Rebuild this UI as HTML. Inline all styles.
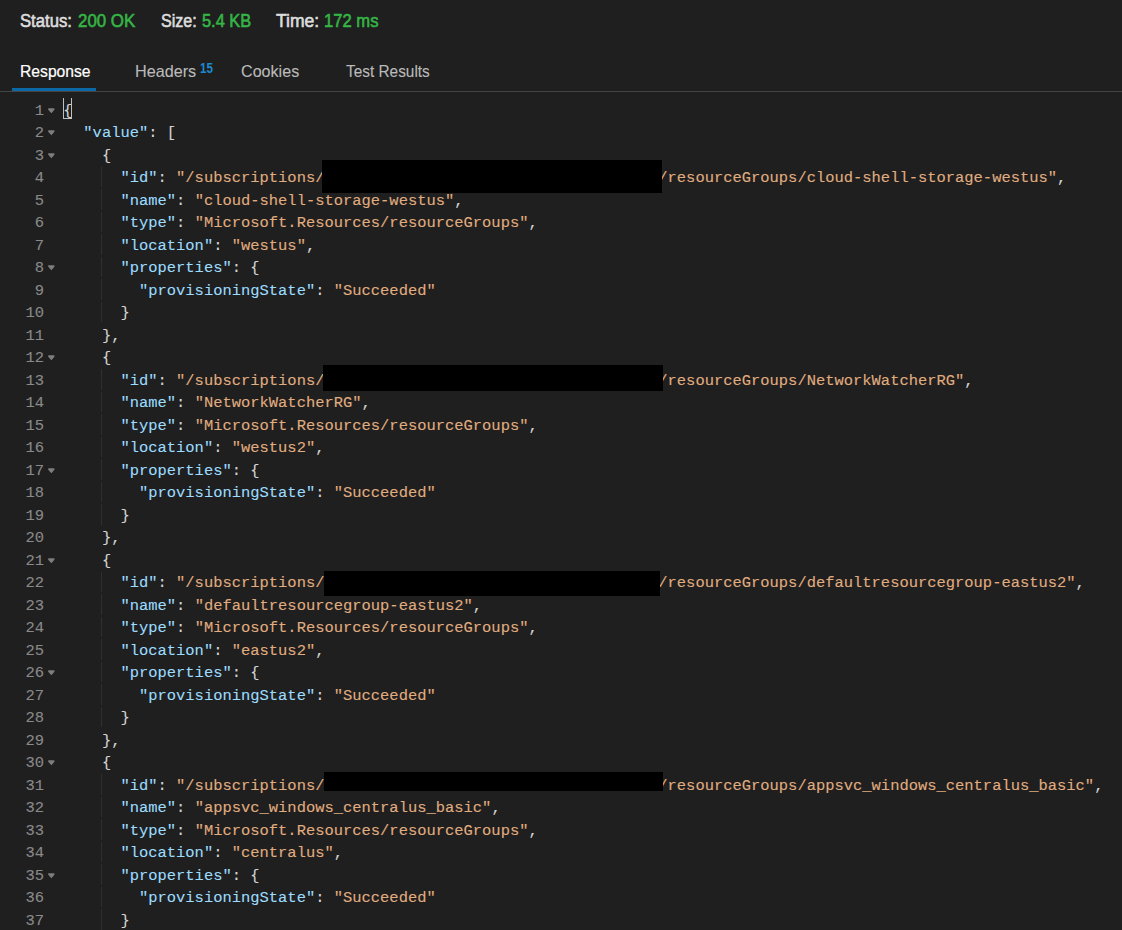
<!DOCTYPE html>
<html><head><meta charset="utf-8"><style>
html,body{margin:0;padding:0;}
body{width:1122px;height:930px;overflow:hidden;background:#1f1f1f;position:relative;}
.ui{font-family:"Liberation Sans",sans-serif;position:absolute;white-space:nowrap;}
.code{font-family:"Liberation Mono",monospace;position:absolute;white-space:pre;-webkit-text-stroke:0.1px currentColor;font-size:15.467px;line-height:22.50px;height:22.50px;color:#d4d4d4;}
.k{color:#9cdcfe}.s{color:#e0ad80}
.ln{font-family:"Liberation Mono",monospace;position:absolute;-webkit-text-stroke:0.1px currentColor;font-size:15.467px;line-height:22.50px;color:#8a8a8a;text-align:right;width:40px;left:4px;}
.fold{position:absolute;width:0;height:0;border-left:3.2px solid transparent;border-right:3.2px solid transparent;border-top:5.3px solid #8a8a8a;}
.redact{position:absolute;background:#000;}
.guide{position:absolute;width:1px;background:#2d302d;}
</style></head><body>

<div class="ui" style="left:20.40px;top:12.90px;font-size:17.8px;font-weight:normal;line-height:1;color:#dddddd;transform:scaleX(0.938);transform-origin:0 0;-webkit-text-stroke:0.6px #dddddd">Status:</div>
<div class="ui" style="left:77.80px;top:12.90px;font-size:17.8px;font-weight:normal;line-height:1;color:#34b545;transform:scaleX(0.949);transform-origin:0 0;-webkit-text-stroke:0.6px #34b545">200 OK</div>
<div class="ui" style="left:160.90px;top:12.90px;font-size:17.8px;font-weight:normal;line-height:1;color:#dddddd;transform:scaleX(0.905);transform-origin:0 0;-webkit-text-stroke:0.6px #dddddd">Size:</div>
<div class="ui" style="left:202.00px;top:12.90px;font-size:17.8px;font-weight:normal;line-height:1;color:#34b545;transform:scaleX(0.921);transform-origin:0 0;-webkit-text-stroke:0.6px #34b545">5.4 KB</div>
<div class="ui" style="left:275.90px;top:12.90px;font-size:17.8px;font-weight:normal;line-height:1;color:#dddddd;transform:scaleX(0.986);transform-origin:0 0;-webkit-text-stroke:0.6px #dddddd">Time:</div>
<div class="ui" style="left:324.26px;top:12.90px;font-size:17.8px;font-weight:normal;line-height:1;color:#34b545;transform:scaleX(0.935);transform-origin:0 0;-webkit-text-stroke:0.6px #34b545">172 ms</div>
<div class="ui" style="left:19.50px;top:62.80px;font-size:16.5px;font-weight:normal;line-height:1;color:#ffffff;transform:scaleX(0.950);transform-origin:0 0;-webkit-text-stroke:0.2px #ffffff">Response</div>
<div class="ui" style="left:134.52px;top:62.80px;font-size:16.5px;font-weight:normal;line-height:1;color:#bababa;transform:scaleX(0.980);transform-origin:0 0;-webkit-text-stroke:0.1px #bababa">Headers</div>
<div class="ui" style="left:199.60px;top:60.90px;font-size:14px;font-weight:bold;line-height:1;color:#1c89d0;transform:scaleX(0.827);transform-origin:0 0;-webkit-text-stroke:0px #1c89d0">15</div>
<div class="ui" style="left:241.40px;top:62.80px;font-size:16.5px;font-weight:normal;line-height:1;color:#bababa;transform:scaleX(0.976);transform-origin:0 0;-webkit-text-stroke:0.1px #bababa">Cookies</div>
<div class="ui" style="left:345.70px;top:62.80px;font-size:16.5px;font-weight:normal;line-height:1;color:#bababa;transform:scaleX(0.932);transform-origin:0 0;-webkit-text-stroke:0.1px #bababa">Test Results</div>
<div style="position:absolute;left:0;top:91px;width:1122px;height:1px;background:#454545"></div>
<div style="position:absolute;left:12px;top:88px;width:84px;height:3px;background:#0d68a6"></div>
<div class="ln" style="top:99.75px">1</div>
<svg class="fold2" width="7" height="6" viewBox="0 0 7 6" style="position:absolute;left:48.2px;top:107.70px"><path d="M0.6 0.2 H6.0 Q6.4 0.2 6.4 0.8 V1.8 L3.4 5.3 L0.2 1.8 V0.8 Q0.2 0.2 0.6 0.2 Z" fill="#7d7d7d"/></svg>
<div class="code" style="left:64.80px;top:99.85px"><span style="position:relative;left:-1.5px">{</span></div>
<div class="ln" style="top:122.25px">2</div>
<svg class="fold2" width="7" height="6" viewBox="0 0 7 6" style="position:absolute;left:48.2px;top:130.20px"><path d="M0.6 0.2 H6.0 Q6.4 0.2 6.4 0.8 V1.8 L3.4 5.3 L0.2 1.8 V0.8 Q0.2 0.2 0.6 0.2 Z" fill="#7d7d7d"/></svg>
<div class="code" style="left:64.80px;top:122.35px">  <span class="k">&quot;value&quot;</span>: [</div>
<div class="ln" style="top:144.75px">3</div>
<svg class="fold2" width="7" height="6" viewBox="0 0 7 6" style="position:absolute;left:48.2px;top:152.70px"><path d="M0.6 0.2 H6.0 Q6.4 0.2 6.4 0.8 V1.8 L3.4 5.3 L0.2 1.8 V0.8 Q0.2 0.2 0.6 0.2 Z" fill="#7d7d7d"/></svg>
<div class="code" style="left:64.80px;top:144.85px">    {</div>
<div class="ln" style="top:167.25px">4</div>
<div class="code" style="left:64.80px;top:167.35px">      <span class="k">&quot;id&quot;</span>: <span class="s">&quot;/subscriptions/</span>                                    <span class="s">/resourceGroups/cloud-shell-storage-westus&quot;</span>,</div>
<div class="redact" style="left:322px;top:160px;width:340px;height:33px"></div>
<div class="ln" style="top:189.75px">5</div>
<div class="code" style="left:64.80px;top:189.85px">      <span class="k">&quot;name&quot;</span>: <span class="s">&quot;cloud-shell-storage-westus&quot;</span>,</div>
<div class="ln" style="top:212.25px">6</div>
<div class="code" style="left:64.80px;top:212.35px">      <span class="k">&quot;type&quot;</span>: <span class="s">&quot;Microsoft.Resources/resourceGroups&quot;</span>,</div>
<div class="ln" style="top:234.75px">7</div>
<div class="code" style="left:64.80px;top:234.85px">      <span class="k">&quot;location&quot;</span>: <span class="s">&quot;westus&quot;</span>,</div>
<div class="ln" style="top:257.25px">8</div>
<svg class="fold2" width="7" height="6" viewBox="0 0 7 6" style="position:absolute;left:48.2px;top:265.20px"><path d="M0.6 0.2 H6.0 Q6.4 0.2 6.4 0.8 V1.8 L3.4 5.3 L0.2 1.8 V0.8 Q0.2 0.2 0.6 0.2 Z" fill="#7d7d7d"/></svg>
<div class="code" style="left:64.80px;top:257.35px">      <span class="k">&quot;properties&quot;</span>: {</div>
<div class="ln" style="top:279.75px">9</div>
<div class="code" style="left:64.80px;top:279.85px">        <span class="k">&quot;provisioningState&quot;</span>: <span class="s">&quot;Succeeded&quot;</span></div>
<div class="ln" style="top:302.25px">10</div>
<div class="code" style="left:64.80px;top:302.35px">      }</div>
<div class="ln" style="top:324.75px">11</div>
<div class="code" style="left:64.80px;top:324.85px">    },</div>
<div class="ln" style="top:347.25px">12</div>
<svg class="fold2" width="7" height="6" viewBox="0 0 7 6" style="position:absolute;left:48.2px;top:355.20px"><path d="M0.6 0.2 H6.0 Q6.4 0.2 6.4 0.8 V1.8 L3.4 5.3 L0.2 1.8 V0.8 Q0.2 0.2 0.6 0.2 Z" fill="#7d7d7d"/></svg>
<div class="code" style="left:64.80px;top:347.35px">    {</div>
<div class="ln" style="top:369.75px">13</div>
<div class="code" style="left:64.80px;top:369.85px">      <span class="k">&quot;id&quot;</span>: <span class="s">&quot;/subscriptions/</span>                                    <span class="s">/resourceGroups/NetworkWatcherRG&quot;</span>,</div>
<div class="redact" style="left:323px;top:365px;width:340px;height:26px"></div>
<div class="ln" style="top:392.25px">14</div>
<div class="code" style="left:64.80px;top:392.35px">      <span class="k">&quot;name&quot;</span>: <span class="s">&quot;NetworkWatcherRG&quot;</span>,</div>
<div class="ln" style="top:414.75px">15</div>
<div class="code" style="left:64.80px;top:414.85px">      <span class="k">&quot;type&quot;</span>: <span class="s">&quot;Microsoft.Resources/resourceGroups&quot;</span>,</div>
<div class="ln" style="top:437.25px">16</div>
<div class="code" style="left:64.80px;top:437.35px">      <span class="k">&quot;location&quot;</span>: <span class="s">&quot;westus2&quot;</span>,</div>
<div class="ln" style="top:459.75px">17</div>
<svg class="fold2" width="7" height="6" viewBox="0 0 7 6" style="position:absolute;left:48.2px;top:467.70px"><path d="M0.6 0.2 H6.0 Q6.4 0.2 6.4 0.8 V1.8 L3.4 5.3 L0.2 1.8 V0.8 Q0.2 0.2 0.6 0.2 Z" fill="#7d7d7d"/></svg>
<div class="code" style="left:64.80px;top:459.85px">      <span class="k">&quot;properties&quot;</span>: {</div>
<div class="ln" style="top:482.25px">18</div>
<div class="code" style="left:64.80px;top:482.35px">        <span class="k">&quot;provisioningState&quot;</span>: <span class="s">&quot;Succeeded&quot;</span></div>
<div class="ln" style="top:504.75px">19</div>
<div class="code" style="left:64.80px;top:504.85px">      }</div>
<div class="ln" style="top:527.25px">20</div>
<div class="code" style="left:64.80px;top:527.35px">    },</div>
<div class="ln" style="top:549.75px">21</div>
<svg class="fold2" width="7" height="6" viewBox="0 0 7 6" style="position:absolute;left:48.2px;top:557.70px"><path d="M0.6 0.2 H6.0 Q6.4 0.2 6.4 0.8 V1.8 L3.4 5.3 L0.2 1.8 V0.8 Q0.2 0.2 0.6 0.2 Z" fill="#7d7d7d"/></svg>
<div class="code" style="left:64.80px;top:549.85px">    {</div>
<div class="ln" style="top:572.25px">22</div>
<div class="code" style="left:64.80px;top:572.35px">      <span class="k">&quot;id&quot;</span>: <span class="s">&quot;/subscriptions/</span>                                    <span class="s">/resourceGroups/defaultresourcegroup-eastus2&quot;</span>,</div>
<div class="redact" style="left:324px;top:571px;width:336px;height:25px"></div>
<div class="ln" style="top:594.75px">23</div>
<div class="code" style="left:64.80px;top:594.85px">      <span class="k">&quot;name&quot;</span>: <span class="s">&quot;defaultresourcegroup-eastus2&quot;</span>,</div>
<div class="ln" style="top:617.25px">24</div>
<div class="code" style="left:64.80px;top:617.35px">      <span class="k">&quot;type&quot;</span>: <span class="s">&quot;Microsoft.Resources/resourceGroups&quot;</span>,</div>
<div class="ln" style="top:639.75px">25</div>
<div class="code" style="left:64.80px;top:639.85px">      <span class="k">&quot;location&quot;</span>: <span class="s">&quot;eastus2&quot;</span>,</div>
<div class="ln" style="top:662.25px">26</div>
<svg class="fold2" width="7" height="6" viewBox="0 0 7 6" style="position:absolute;left:48.2px;top:670.20px"><path d="M0.6 0.2 H6.0 Q6.4 0.2 6.4 0.8 V1.8 L3.4 5.3 L0.2 1.8 V0.8 Q0.2 0.2 0.6 0.2 Z" fill="#7d7d7d"/></svg>
<div class="code" style="left:64.80px;top:662.35px">      <span class="k">&quot;properties&quot;</span>: {</div>
<div class="ln" style="top:684.75px">27</div>
<div class="code" style="left:64.80px;top:684.85px">        <span class="k">&quot;provisioningState&quot;</span>: <span class="s">&quot;Succeeded&quot;</span></div>
<div class="ln" style="top:707.25px">28</div>
<div class="code" style="left:64.80px;top:707.35px">      }</div>
<div class="ln" style="top:729.75px">29</div>
<div class="code" style="left:64.80px;top:729.85px">    },</div>
<div class="ln" style="top:752.25px">30</div>
<svg class="fold2" width="7" height="6" viewBox="0 0 7 6" style="position:absolute;left:48.2px;top:760.20px"><path d="M0.6 0.2 H6.0 Q6.4 0.2 6.4 0.8 V1.8 L3.4 5.3 L0.2 1.8 V0.8 Q0.2 0.2 0.6 0.2 Z" fill="#7d7d7d"/></svg>
<div class="code" style="left:64.80px;top:752.35px">    {</div>
<div class="ln" style="top:774.75px">31</div>
<div class="code" style="left:64.80px;top:774.85px">      <span class="k">&quot;id&quot;</span>: <span class="s">&quot;/subscriptions/</span>                                    <span class="s">/resourceGroups/appsvc_windows_centralus_basic&quot;</span>,</div>
<div class="redact" style="left:324px;top:772px;width:339px;height:19px"></div>
<div class="ln" style="top:797.25px">32</div>
<div class="code" style="left:64.80px;top:797.35px">      <span class="k">&quot;name&quot;</span>: <span class="s">&quot;appsvc_windows_centralus_basic&quot;</span>,</div>
<div class="ln" style="top:819.75px">33</div>
<div class="code" style="left:64.80px;top:819.85px">      <span class="k">&quot;type&quot;</span>: <span class="s">&quot;Microsoft.Resources/resourceGroups&quot;</span>,</div>
<div class="ln" style="top:842.25px">34</div>
<div class="code" style="left:64.80px;top:842.35px">      <span class="k">&quot;location&quot;</span>: <span class="s">&quot;centralus&quot;</span>,</div>
<div class="ln" style="top:864.75px">35</div>
<svg class="fold2" width="7" height="6" viewBox="0 0 7 6" style="position:absolute;left:48.2px;top:872.70px"><path d="M0.6 0.2 H6.0 Q6.4 0.2 6.4 0.8 V1.8 L3.4 5.3 L0.2 1.8 V0.8 Q0.2 0.2 0.6 0.2 Z" fill="#7d7d7d"/></svg>
<div class="code" style="left:64.80px;top:864.85px">      <span class="k">&quot;properties&quot;</span>: {</div>
<div class="ln" style="top:887.25px">36</div>
<div class="code" style="left:64.80px;top:887.35px">        <span class="k">&quot;provisioningState&quot;</span>: <span class="s">&quot;Succeeded&quot;</span></div>
<div class="ln" style="top:909.75px">37</div>
<div class="code" style="left:64.80px;top:909.85px">      }</div>
<div class="guide" style="left:101px;top:166.95px;height:20.5px"></div>
<div class="guide" style="left:101px;top:189.45px;height:20.5px"></div>
<div class="guide" style="left:101px;top:211.95px;height:20.5px"></div>
<div class="guide" style="left:101px;top:234.45px;height:20.5px"></div>
<div class="guide" style="left:101px;top:256.95px;height:20.5px"></div>
<div class="guide" style="left:101px;top:279.45px;height:20.5px"></div>
<div class="guide" style="left:101px;top:301.95px;height:20.5px"></div>
<div class="guide" style="left:101px;top:369.45px;height:20.5px"></div>
<div class="guide" style="left:101px;top:391.95px;height:20.5px"></div>
<div class="guide" style="left:101px;top:414.45px;height:20.5px"></div>
<div class="guide" style="left:101px;top:436.95px;height:20.5px"></div>
<div class="guide" style="left:101px;top:459.45px;height:20.5px"></div>
<div class="guide" style="left:101px;top:481.95px;height:20.5px"></div>
<div class="guide" style="left:101px;top:504.45px;height:20.5px"></div>
<div class="guide" style="left:101px;top:571.95px;height:20.5px"></div>
<div class="guide" style="left:101px;top:594.45px;height:20.5px"></div>
<div class="guide" style="left:101px;top:616.95px;height:20.5px"></div>
<div class="guide" style="left:101px;top:639.45px;height:20.5px"></div>
<div class="guide" style="left:101px;top:661.95px;height:20.5px"></div>
<div class="guide" style="left:101px;top:684.45px;height:20.5px"></div>
<div class="guide" style="left:101px;top:706.95px;height:20.5px"></div>
<div class="guide" style="left:101px;top:774.45px;height:20.5px"></div>
<div class="guide" style="left:101px;top:796.95px;height:20.5px"></div>
<div class="guide" style="left:101px;top:819.45px;height:20.5px"></div>
<div class="guide" style="left:101px;top:841.95px;height:20.5px"></div>
<div class="guide" style="left:101px;top:864.45px;height:20.5px"></div>
<div class="guide" style="left:101px;top:886.95px;height:20.5px"></div>
<div class="guide" style="left:101px;top:909.45px;height:20.5px"></div>
<div style="position:absolute;left:63px;top:97.8px;width:7px;height:20.3px;border:1px solid #c0c0c0;border-top:none"></div>
</body></html>
